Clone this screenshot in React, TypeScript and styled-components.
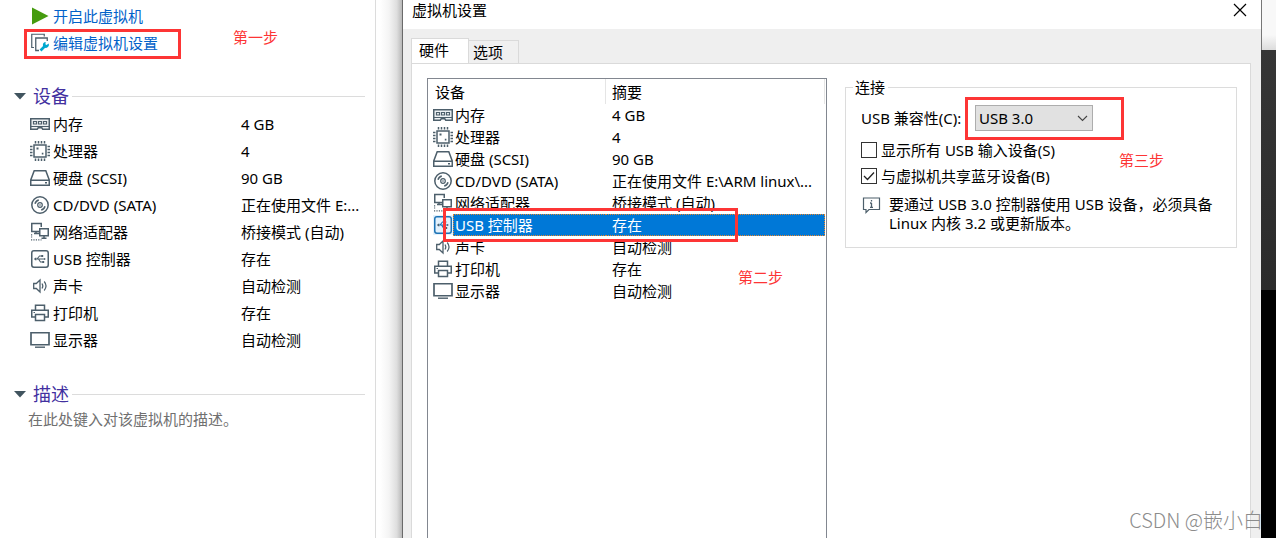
import React from 'react';
import styled, { createGlobalStyle, css } from 'styled-components';

const GlobalStyle = createGlobalStyle`
  *, *::before, *::after { box-sizing: border-box; }
  body {
    margin: 0;
    background: #fff;
    color: #000;
    font-family: "Noto Sans", "Noto Sans CJK SC", sans-serif;
    font-size: 15px;
    line-height: 20px;
  }
`;

const Page = styled.div`
  position: relative;
  display: flex;
  min-height: 100vh;
  overflow: hidden;
`;

/* ---------- summary pane ---------- */

const Summary = styled.aside`
  flex: 0 0 376px;
  padding: 2px 10px 0 14px;
  border-right: 1px solid #dcdcdc;
`;

const Actions = styled.nav`
  display: flex;
  flex-direction: column;
  padding-left: 16px;
  margin-bottom: 28px;
`;

const ActionLink = styled.a`
  display: flex;
  align-items: center;
  gap: 3px;
  height: 27px;
  color: #0262c9;
  text-decoration: none;
`;

const SectionTitle = styled.h2`
  display: flex;
  align-items: center;
  height: 24px;
  margin: 0 0 2px;
  color: #42309f;
  font-size: 18px;
  font-weight: 400;
  line-height: 24px;

  svg { margin-right: 7px; }

  &::after {
    content: "";
    flex: 1;
    height: 1px;
    margin-left: 3px;
    background: #dcdcdc;
  }
`;

const SummaryTable = styled.table`
  width: 100%;
  margin-bottom: 29px;
  border-collapse: collapse;
  table-layout: fixed;

  td {
    height: 27px;
    padding: 0;
    white-space: nowrap;
  }
  td:first-child {
    width: 227px;
    padding-left: 16px;
  }
`;

const Description = styled.p`
  margin: 0;
  padding-left: 14px;
  color: #707070;
  line-height: 22px;
`;

const DeviceName = styled.span<{ $gap: number }>`
  display: flex;
  align-items: center;
  gap: ${p => p.$gap}px;
`;

const Icon = styled.svg`
  flex: none;
  display: block;
  width: 20px;
  height: 20px;
  fill: none;
  stroke: #4d5f6b;
  stroke-width: 1.5;
`;

/* ---------- settings dialog ---------- */

const Shade = styled.div`
  flex: 0 0 26px;
  background: linear-gradient(to right, #fff 15%, #f4f4f4 50%, #dedede 80%, #b8b8b8);
`;

const Dialog = styled.section`
  flex: 1;
  min-width: 0;
  display: flex;
  flex-direction: column;
  border-left: 1px solid #6a6a6a;
  background: #efefef;
`;

const TitleBar = styled.header`
  display: flex;
  align-items: flex-start;
  justify-content: space-between;
  height: 29px;
  padding: 0 12px 0 9px;
  background: #fff;
`;

const DialogTitle = styled.h1`
  margin: 0;
  font-size: 15px;
  font-weight: 400;
  line-height: 20px;
`;

const CloseButton = styled.button`
  display: flex;
  width: 18px;
  height: 20px;
  padding: 0;
  align-items: center;
  justify-content: center;
  border: 0;
  background: none;
`;

const DialogBody = styled.div`
  flex: 1;
  display: flex;
  flex-direction: column;
  padding: 9px 10px 0 8px;
`;

const Tabs = styled.div`
  display: flex;
  align-items: flex-end;
  height: 26px;
  margin-bottom: -1px;
`;

const Tab = styled.button<{ $active?: boolean }>`
  height: 24px;
  padding: 0 15px 0 4px;
  border: 1px solid #dadada;
  border-left: 0;
  background: #f0f0f0;
  color: #000;
  font: inherit;
  line-height: 20px;

  ${p => p.$active && css`
    height: 26px;
    padding: 0 19px 2px 7px;
    border-left: 1px solid #dadada;
    border-bottom-color: #fff;
    background: #fff;
  `}
`;

const TabPanel = styled.div`
  flex: 1;
  display: flex;
  align-items: stretch;
  gap: 18px;
  padding: 14px 13px 0 15px;
  border: 1px solid #dadada;
  border-bottom: 0;
  background: #fff;
`;

const DeviceList = styled.div`
  flex: 0 0 400px;
  padding: 0 1px;
  border: 1px solid #828790;
  border-bottom: 0;
`;

const DeviceLabel = styled.span`
  flex: 1;
  height: 22px;
  padding-left: 2px;
  line-height: 22px;
`;

const DeviceTable = styled.table`
  width: 100%;
  border-spacing: 0;
  table-layout: fixed;

  th, td {
    height: 22px;
    padding: 0 0 0 6px;
    text-align: left;
    font-weight: 400;
    line-height: 20px;
    white-space: nowrap;
  }
  th {
    height: 25px;
    border-right: 1px solid #e5e5e5;
  }
  th:first-child { width: 177px; }
  td:first-child { padding-left: 4px; }
`;

const DeviceRow = styled.tr<{ $selected?: boolean }>`
  ${p => p.$selected && css`
    color: #fff;

    td:last-child {
      background: #0078d7;
      border: 1px dotted #e8862c;
      border-left: 0;
    }
    ${DeviceLabel} {
      padding-left: 1px;
      line-height: 20px;
      background: #0078d7;
      border: 1px dotted #e8862c;
      border-right: 0;
    }
    svg { background: #e3f1fc; stroke: #1d73b5; }
  `}
`;

const Group = styled.fieldset`
  flex: 1;
  min-width: 0;
  align-self: flex-start;
  margin: 0;
  padding: 9px 15px 14px;
  border: 1px solid #dcdcdc;
`;

const Legend = styled.legend`
  margin-left: -8px;
  padding: 0 3px 0 2px;
  line-height: 18px;
`;

const Field = styled.div`
  display: flex;
  align-items: center;
  margin-bottom: 6px;
  white-space: nowrap;

  label { flex: 0 0 114px; }
`;

const SelectBox = styled.div`
  display: grid;
  width: 118px;
  height: 26px;
  align-items: center;

  > * { grid-area: 1 / 1; }
  > svg { justify-self: end; margin-right: 5px; pointer-events: none; }
`;

const Select = styled.select`
  width: 118px;
  height: 26px;
  padding: 0 3px;
  appearance: none;
  border: 1px solid #adadad;
  border-radius: 0;
  background: #e1e1e1;
  color: #000;
  font: inherit;
`;

const CheckRow = styled.label`
  display: flex;
  align-items: center;
  gap: 4px;
  height: 26px;
  white-space: nowrap;
`;

const Checkbox = styled.input`
  width: 16px;
  height: 16px;
  margin: 0;
  appearance: none;
  border: 1px solid #333;
  background: #fff;

  &:checked {
    background: #fff url("data:image/svg+xml,%3Csvg xmlns='http://www.w3.org/2000/svg' viewBox='0 0 14 14'%3E%3Cpath d='M2 7l3.5 3.5L12 3.5' fill='none' stroke='%23222' stroke-width='1.3'/%3E%3C/svg%3E");
  }
`;

const Note = styled.div`
  display: flex;
  align-items: flex-start;
  gap: 8px;
  margin-top: 6px;

  p { margin: 0; line-height: 19px; }
`;

/* ---------- desktop edge ---------- */

const Desktop = styled.div`
  flex: 0 0 15px;
  display: flex;
  flex-direction: column;
  background: #000;

  &::before {
    content: "";
    height: 50px;
    background: linear-gradient(#f8f8f8 70%, #dcdcdc);
    border-left: 1px solid #777;
  }
  &::after {
    content: "";
    height: 240px;
    background: linear-gradient(#363636, #2b2b2b);
  }
`;

/* ---------- annotations drawn over the windows ---------- */

const Mark = styled.div<{ $x: number; $y: number; $w: number; $h: number }>`
  position: absolute;
  left: ${p => p.$x}px;
  top: ${p => p.$y}px;
  width: ${p => p.$w}px;
  height: ${p => p.$h}px;
  border: 3px solid #fd3535;
  pointer-events: none;
`;

const Step = styled.span<{ $x: number; $y: number }>`
  position: absolute;
  left: ${p => p.$x}px;
  top: ${p => p.$y}px;
  color: #fd3535;
`;

const Watermark = styled.span`
  position: absolute;
  right: 13px;
  bottom: 4px;
  color: #8c8c8c;
  font-family: "Noto Sans CJK SC", sans-serif;
  font-size: 20px;
  font-weight: 300;
  line-height: 28px;
  white-space: nowrap;
`;

/* ---------- icons ---------- */

type IconName = 'memory' | 'cpu' | 'disk' | 'cd' | 'network' | 'usb' | 'sound' | 'printer' | 'display';

const shapes: Record<IconName, React.ReactNode> = {
  memory: (
    <>
      <path d="M.75 4.75h18.5v10.5h-6.5l-1-1.5h-3.5l-1 1.5H.75z" fill="#eef2f4" />
      <path d="M1 12.5h18" strokeWidth="1" />
      <path d="M3.5 7.5h3v2.5h-3zM8.5 7.5h3v2.5h-3zM13.5 7.5h3v2.5h-3z" strokeWidth="1.2" />
    </>
  ),
  cpu: (
    <>
      <rect x="4" y="4" width="12" height="12" />
      <path d="M5.5 0v2.5M8.5 0v2.5M11.5 0v2.5M14.5 0v2.5M5.5 17.5V20M8.5 17.5V20M11.5 17.5V20M14.5 17.5V20M0 5.5h2.5M0 8.5h2.5M0 11.5h2.5M0 14.5h2.5M17.5 5.5H20M17.5 8.5H20M17.5 11.5H20M17.5 14.5H20" />
      <path d="M6.5 6.5h2v2h-2zM11.8 11.8h1.6v1.6h-1.6z" fill="#4d5f6b" stroke="none" />
    </>
  ),
  disk: (
    <>
      <path d="M4.2 2.75h11.6L19.25 12v5.25H.75V12zM.75 12.25h18.5" />
      <path d="M15 14.8h2" strokeWidth="1.4" />
    </>
  ),
  cd: (
    <>
      <circle cx="10" cy="10" r="8.2" />
      <circle cx="10" cy="10" r="2.3" strokeWidth="1.2" />
      <circle cx="10" cy="10" r=".8" fill="#4d5f6b" stroke="none" />
      <path d="M5 8.8A5.3 5.3 0 0 1 8.8 5M15 11.2a5.3 5.3 0 0 1-3.8 3.8" />
    </>
  ),
  network: (
    <>
      <path d="M9 9.5H1.75v-8h9.5v3.5M4 11.5h5M6 9.5v2" />
      <path d="M9.75 6.75h8.5v7h-8.5zM14 13.75v2M11.5 16.2h5" />
      <path d="M1 12.8h1.5M1 15h1.2M1 17.8h10.5" strokeWidth="1.2" strokeDasharray="1.2 1.2" />
    </>
  ),
  usb: (
    <>
      <rect x="1.75" y="1.75" width="16.5" height="16.5" rx="2.2" />
      <path d="M5 10h10M7 10l2.5-3h2M8.5 10l2 3h2" strokeWidth="1.1" />
      <path d="M3.8 10l2.4-1.7v3.4zM11.2 5.9h2v2h-2zM12.2 12h2v2h-2zM14 9l2 1-2 1z" fill="#4d5f6b" stroke="none" />
    </>
  ),
  sound: (
    <>
      <path d="M3.7 7.5h2.6L10 4v12l-3.7-3.5H3.7z" strokeWidth="1.3" />
      <path d="M12 7.5c1 1.5 1 3.5 0 5M14.2 5.5c2.2 2.7 2.2 6.3 0 9" strokeWidth="1.2" />
    </>
  ),
  printer: (
    <>
      <path d="M5.5 7V2.25h9V7M5.5 14H1.75V7.25h16.5V14H14.5" />
      <path d="M5.5 11.5h9v6h-9z" />
      <path d="M3.5 9.5H5" strokeWidth="1.2" />
    </>
  ),
  display: (
    <>
      <path d="M1 2.75h18v12H1z" strokeWidth="1.7" />
      <path d="M5 17.2h10" strokeWidth="1.4" />
    </>
  ),
};

const DeviceIcon = ({ name }: { name: IconName }) => (
  <Icon viewBox="0 0 20 20" aria-hidden="true">{shapes[name]}</Icon>
);

const Caret = () => (
  <svg width="12" height="7" viewBox="0 0 12 7" aria-hidden="true">
    <path d="M0 0h12L6 6.5z" fill="#41545f" />
  </svg>
);

interface Device {
  icon: IconName;
  name: string;
  brief: string;
  detail?: string;
  selected?: boolean;
}

const devices: Device[] = [
  { icon: 'memory', name: '内存', brief: '4 GB' },
  { icon: 'cpu', name: '处理器', brief: '4' },
  { icon: 'disk', name: '硬盘 (SCSI)', brief: '90 GB' },
  { icon: 'cd', name: 'CD/DVD (SATA)', brief: '正在使用文件 E:...', detail: '正在使用文件 E:\\ARM linux\\...' },
  { icon: 'network', name: '网络适配器', brief: '桥接模式 (自动)' },
  { icon: 'usb', name: 'USB 控制器', brief: '存在', selected: true },
  { icon: 'sound', name: '声卡', brief: '自动检测' },
  { icon: 'printer', name: '打印机', brief: '存在' },
  { icon: 'display', name: '显示器', brief: '自动检测' },
];

export default function App() {
  return (
    <>
      <GlobalStyle />
      <Page>
        <Summary>
          <Actions>
            <ActionLink href="#start">
              <Icon viewBox="0 0 20 20" aria-hidden="true">
                <path d="M2 1.5l16.5 8.5L2 18.5z" fill="#459b0e" stroke="none" />
              </Icon>
              开启此虚拟机
            </ActionLink>
            <ActionLink href="#edit">
              <Icon viewBox="0 0 20 20" aria-hidden="true">
                <path d="M4 14.5H1.75V1.25h12.5V3.5" strokeWidth="1.2" />
                <path d="M9 17.5H5.75V5h11.5v3" strokeWidth="1.3" />
                <path d="M10.5 17.5l5-5" stroke="#00a8cf" strokeWidth="2.6" />
                <path d="M18.6 10.6a3 3 0 1 1-2.9-1.7l-.3 2.3 1.2.9z" fill="#00a8cf" stroke="none" />
              </Icon>
              编辑虚拟机设置
            </ActionLink>
          </Actions>

          <SectionTitle><Caret />设备</SectionTitle>
          <SummaryTable>
            <tbody>
              {devices.map(d => (
                <tr key={d.name}>
                  <td><DeviceName $gap={3}><DeviceIcon name={d.icon} />{d.name}</DeviceName></td>
                  <td>{d.brief}</td>
                </tr>
              ))}
            </tbody>
          </SummaryTable>

          <SectionTitle><Caret />描述</SectionTitle>
          <Description>在此处键入对该虚拟机的描述。</Description>
        </Summary>

        <Shade />

        <Dialog aria-label="虚拟机设置">
          <TitleBar>
            <DialogTitle>虚拟机设置</DialogTitle>
            <CloseButton type="button" aria-label="关闭">
              <svg width="14" height="14" viewBox="0 0 14 14" aria-hidden="true">
                <path d="M1 1l12 12M13 1L1 13" stroke="#000" strokeWidth="1.2" />
              </svg>
            </CloseButton>
          </TitleBar>
          <DialogBody>
            <Tabs role="tablist">
              <Tab type="button" role="tab" aria-selected="true" $active>硬件</Tab>
              <Tab type="button" role="tab" aria-selected="false">选项</Tab>
            </Tabs>
            <TabPanel role="tabpanel">
              <DeviceList>
                <DeviceTable>
                  <thead>
                    <tr><th scope="col">设备</th><th scope="col">摘要</th></tr>
                  </thead>
                  <tbody>
                    {devices.map(d => (
                      <DeviceRow key={d.name} $selected={d.selected}>
                        <td>
                          <DeviceName $gap={0}>
                            <DeviceIcon name={d.icon} />
                            <DeviceLabel>{d.name}</DeviceLabel>
                          </DeviceName>
                        </td>
                        <td>{d.detail ?? d.brief}</td>
                      </DeviceRow>
                    ))}
                  </tbody>
                </DeviceTable>
              </DeviceList>

              <Group>
                <Legend>连接</Legend>
                <Field>
                  <label htmlFor="usb-version">USB 兼容性(C):</label>
                  <SelectBox>
                    <Select id="usb-version" defaultValue="3.0">
                      <option value="3.0">USB 3.0</option>
                    </Select>
                    <svg width="11" height="7" viewBox="0 0 11 7" aria-hidden="true">
                      <path d="M1 1l4.5 4.5L10 1" fill="none" stroke="#444" strokeWidth="1.1" />
                    </svg>
                  </SelectBox>
                </Field>
                <CheckRow><Checkbox type="checkbox" />显示所有 USB 输入设备(S)</CheckRow>
                <CheckRow><Checkbox type="checkbox" defaultChecked />与虚拟机共享蓝牙设备(B)</CheckRow>
                <Note>
                  <Icon viewBox="0 0 20 20" aria-hidden="true">
                    <path d="M2.5 3h16v11.5H8L5 17.5v-3H2.5z" strokeWidth="1.2" />
                    <path d="M10.5 5v1.5M10.5 8v4.5M9 8h1.5M9 12.3h3" strokeWidth="1.3" />
                  </Icon>
                  <p>要通过 USB 3.0 控制器使用 USB 设备，必须具备 Linux 内核 3.2 或更新版本。</p>
                </Note>
              </Group>
            </TabPanel>
          </DialogBody>
        </Dialog>

        <Desktop />

        <Mark $x={24} $y={29} $w={157} $h={30} />
        <Mark $x={443} $y={208} $w={295} $h={34} />
        <Mark $x={965} $y={97} $w={159} $h={43} />
        <Step $x={233} $y={27}>第一步</Step>
        <Step $x={738} $y={267}>第二步</Step>
        <Step $x={1119} $y={150}>第三步</Step>
        <Watermark>CSDN @嵌小白</Watermark>
      </Page>
    </>
  );
}
